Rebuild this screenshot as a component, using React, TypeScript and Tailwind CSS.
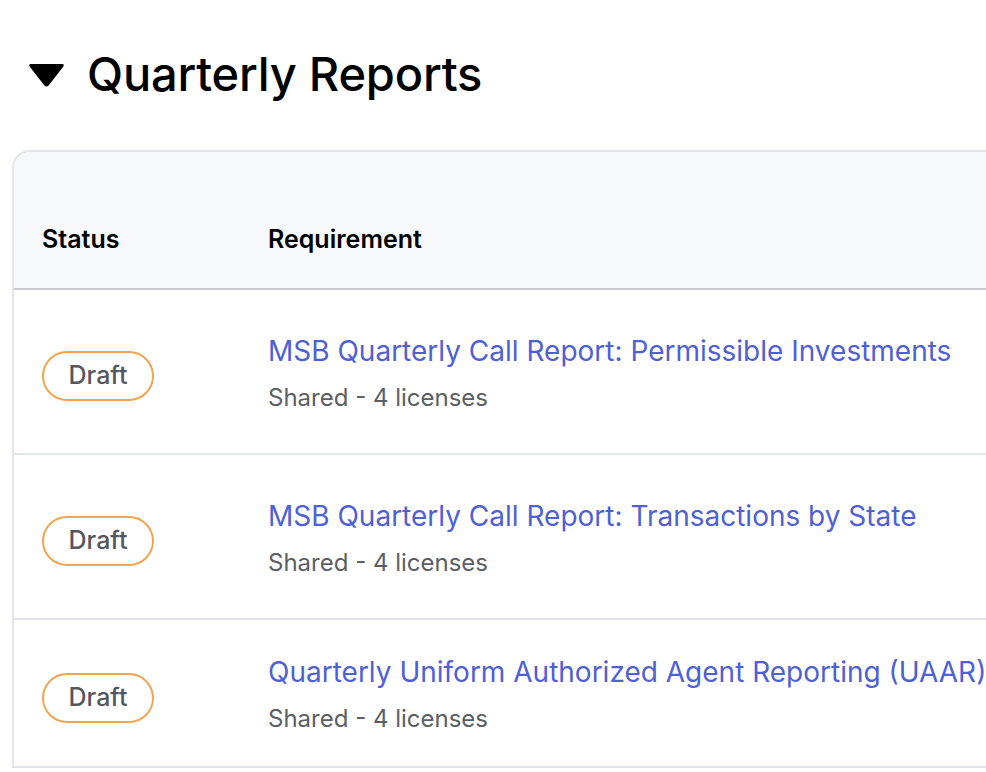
import React from 'react';

const rows = [
  { title: 'MSB Quarterly Call Report: Permissible Investments', sub: 'Shared - 4 licenses' },
  { title: 'MSB Quarterly Call Report: Transactions by State', sub: 'Shared - 4 licenses' },
  { title: 'Quarterly Uniform Authorized Agent Reporting (UAAR)', sub: 'Shared - 4 licenses' },
];

export default function App() {
  return (
    <div className="h-[772px] w-[986px] overflow-hidden bg-white font-['Inter',sans-serif]">
      {/* Section heading */}
      <div className="flex h-[150px] items-start pl-[28px] pt-[44px]">
        <div className="flex items-center gap-[22px]">
          <svg width="37" height="26" viewBox="0 0 37 26" className="mt-[2px]">
            <path d="M3 2 H34 Q37 2 35 5 L21 23 Q18.5 26 16 23 L2 5 Q0 2 3 2 Z" fill="#000" />
          </svg>
          <h2 className="text-[47px] leading-[60px] font-medium text-black tracking-[-0.2px]">Quarterly Reports</h2>
        </div>
      </div>

      {/* Table card */}
      <div className="ml-[12px] w-[1100px] overflow-hidden rounded-tl-[18px] border-l-2 border-t-2 border-[#e3e5e9]">
        <div className="flex h-[138px] items-end border-b-2 border-[#c8cacd] bg-[#f7f8fa] pb-[34px]">
          <div className="w-[254px] pl-[28px] text-[25px] font-semibold leading-[30px] text-black">Status</div>
          <div className="text-[25px] font-semibold leading-[30px] text-black">Requirement</div>
        </div>
        {rows.map((row, i) => (
          <div
            key={row.title}
            className={`flex items-center border-b-2 border-[#e1e4e8] ${i === rows.length - 1 ? 'h-[148px]' : 'h-[165px]'}`}
          >
            <div className="w-[254px] pl-[28px] pt-[9px]">
              <span className="inline-flex h-[50px] w-[112px] items-center justify-center rounded-full border-2 border-[#f0a552] text-[25px] font-medium text-[#54585e]">
                Draft
              </span>
            </div>
            <div className="flex flex-col gap-[15px] pt-[3px]">
              <a className="text-[28px] leading-[34px] text-[#4f5fd6]">{row.title}</a>
              <span className="text-[24px] leading-[30px] text-[#5b5f64]">{row.sub}</span>
            </div>
          </div>
        ))}
      </div>
    </div>
  );
}
